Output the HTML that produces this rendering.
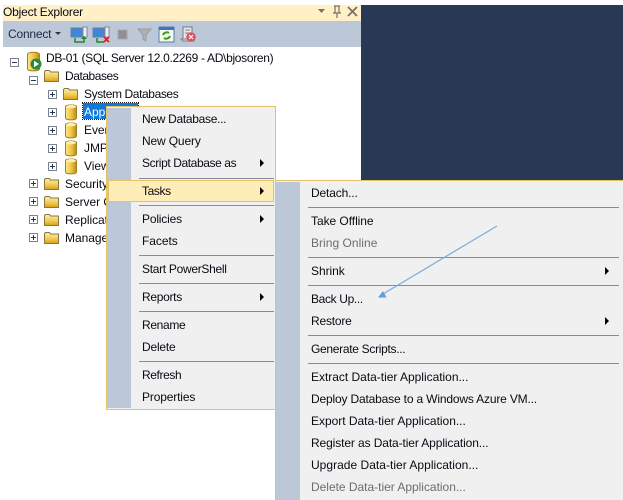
<!DOCTYPE html>
<html><head><meta charset="utf-8">
<style>
html,body{margin:0;padding:0;width:623px;height:500px;overflow:hidden;background:#fff}
body{position:relative;font-family:"Liberation Sans",sans-serif;font-size:12px;color:#000}
div{position:absolute}
.t{line-height:16px;white-space:nowrap;position:absolute;letter-spacing:-.05px;color:#0a0a14}
.t.g{color:#6d6d6d}
.s{position:absolute;height:1px;background:#858b98}
.a{position:absolute;width:0;height:0;border-left:4px solid #000;border-top:4px solid transparent;border-bottom:4px solid transparent}
svg{position:absolute;overflow:visible}
</style></head>
<body>
<div style="left:361px;top:5px;width:262px;height:175px;background:#293955"></div>
<div style="left:3px;top:5px;width:358px;height:16px;background:#fff0c8"></div>
<div style="left:3px;top:21px;width:358px;height:26px;background:#bcc7d8"></div>
<span class="t" style="left:3px;top:4px;letter-spacing:-.18px">Object Explorer</span>
<svg style="left:0;top:0" width="623" height="50">
<path d="M318 9h7l-3.500 4z" fill="#7a7260"/>
<path d="M334 6h6M335 6v7h4V6M333 13h8M337 13v5" fill="none" stroke="#7a7260" stroke-width="1.200"/>
<path d="M348 7l9 9M357 7l-9 9" stroke="#7a7260" stroke-width="1.800"/>
<path d="M55 32h6l-3 3z" fill="#333"/>
<rect x="71" y="28" width="11" height="9" fill="#3f86d8" stroke="#6a7f9c"/><rect x="83" y="27" width="4" height="10" fill="#eef" stroke="#7a8aa0"/>
<path d="M75 38v4h9v-3" fill="none" stroke="#1d8a2a" stroke-width="1.500"/><path d="M81 39l3-3 3 3z" fill="#1d8a2a"/>
<rect x="93" y="28" width="11" height="9" fill="#3f86d8" stroke="#6a7f9c"/><rect x="105" y="27" width="4" height="10" fill="#eef" stroke="#7a8aa0"/>
<path d="M97 38v4h7" fill="none" stroke="#1d8a2a" stroke-width="1.500"/><path d="M104 37l5 5M109 37l-5 5" stroke="#e02020" stroke-width="1.800"/>
<rect x="118" y="30" width="9" height="9" fill="#8d8f94" stroke="#a6a8ad"/>
<path d="M138 29h13l-5 6v6l-3-2v-4z" fill="#aeb0b3" stroke="#999ba0"/>
<rect x="159" y="27" width="15" height="15" fill="#f6f8ee" stroke="#4f7fb5"/><rect x="159" y="27" width="15" height="3" fill="#3f74b5"/>
<path d="M163 35a4 4 0 0 1 6-2M170 36a4 4 0 0 1-6 2" fill="none" stroke="#3a9a20" stroke-width="2"/>
<path d="M183 27h9v12h-9zM181 39h11l2 2h-11z" fill="#e4e6ea" stroke="#777b84"/>
<path d="M185 30h5M185 33h5" stroke="#888"/>
<circle cx="191" cy="37" r="4.800" fill="#d9535f"/><path d="M189 35l4 4M193 35l-4 4" stroke="#fff" stroke-width="1.200"/>
</svg>
<span class="t" style="left:8px;top:26px;color:#1e2a44;letter-spacing:-.2px">Connect</span>

<svg style="left:0;top:47px" width="361" height="200">
<defs>
<linearGradient id="y" x1="0" x2="1" y1="0" y2="0"><stop offset="0" stop-color="#ffe88a"/><stop offset=".55" stop-color="#edc23f"/><stop offset="1" stop-color="#b98a18"/></linearGradient>
<linearGradient id="f" x1="0" x2="0" y1="0" y2="1"><stop offset="0" stop-color="#fff0b0"/><stop offset=".6" stop-color="#f0c850"/><stop offset="1" stop-color="#d99e18"/></linearGradient>
<g id="pl"><rect x=".5" y=".5" width="8" height="8" fill="#fff" stroke="#7a8290"/><path d="M2 4.500h5M4.500 2v5" stroke="#2a3550"/></g>
<g id="mi"><rect x=".5" y=".5" width="8" height="8" fill="#fff" stroke="#7a8290"/><path d="M2 4.500h5" stroke="#2a3550"/></g>
<g id="fo"><path d="M.5 11.500V1.500l1-1h4l1 1.500h8v9.500z" fill="url(#f)" stroke="#8a7640"/></g>
<g id="db"><path d="M.5 2.500C.5 .5 11.500 .5 11.500 2.500V14c0 2.500-11 2.500-11 0z" fill="url(#y)" stroke="#a47f20"/><ellipse cx="6" cy="2.700" rx="5" ry="1.700" fill="#fbeeb0"/></g>
</defs>
<use href="#mi" x="10" y="11"/>
<path d="M27.500 7.500C27.500 4.500 39.500 4.500 39.500 7.500V22c0 2.500-12 2.500-12 0z" fill="url(#y)" stroke="#a47f20"/>
<circle cx="36" cy="17" r="5.500" fill="#2b8a3a"/><path d="M34 13.800v6.400l5-3.200z" fill="#fff"/>
<use href="#mi" x="29" y="29"/><use href="#fo" x="44" y="23"/>
<use href="#pl" x="48" y="43"/><use href="#fo" x="63" y="41"/>
<use href="#pl" x="48" y="61"/><use href="#db" x="65" y="57"/>
<use href="#pl" x="48" y="79"/><use href="#db" x="65" y="75"/>
<use href="#pl" x="48" y="97"/><use href="#db" x="65" y="93"/>
<use href="#pl" x="48" y="115"/><use href="#db" x="65" y="111"/>
<use href="#pl" x="29" y="132"/><use href="#fo" x="44" y="131"/>
<use href="#pl" x="29" y="150"/><use href="#fo" x="44" y="149"/>
<use href="#pl" x="29" y="168"/><use href="#fo" x="44" y="167"/>
<use href="#pl" x="29" y="186"/><use href="#fo" x="44" y="185"/>
</svg>
<span class="t" style="left:46px;top:50px;letter-spacing:-.31px">DB-01 (SQL Server 12.0.2269 - AD\bjosoren)</span>
<span class="t" style="left:65px;top:68px;letter-spacing:-.45px">Databases</span>
<span class="t" style="left:84px;top:86px;letter-spacing:-.4px">System Databases</span>
<div style="left:83px;top:103px;width:55px;height:16px;background:#0f78d8;outline:1px dotted #1a1a1a"></div>
<span class="t" style="left:84px;top:104px;color:#fff">App</span>
<span class="t" style="left:84px;top:122px">Ever</span>
<span class="t" style="left:84px;top:140px">JMP</span>
<span class="t" style="left:84px;top:158px">View</span>
<span class="t" style="left:65px;top:176px">Security</span>
<span class="t" style="left:65px;top:194px">Server O</span>
<span class="t" style="left:65px;top:212px">Replicat</span>
<span class="t" style="left:65px;top:230px">Manage</span>

<!-- submenu -->
<div style="left:275px;top:180px;width:348px;height:320px;background:#f0f0f0;border-top:1px solid #e5c365;border-left:1px solid #e5c365;box-sizing:border-box"></div>
<div style="left:276px;top:182px;width:24px;height:318px;background:#bcc7d8"></div>
<div class="s" style="left:308px;top:207px;width:311px"></div>
<div class="s" style="left:308px;top:257px;width:311px"></div>
<div class="s" style="left:308px;top:285px;width:311px"></div>
<div class="s" style="left:308px;top:335px;width:311px"></div>
<div class="s" style="left:308px;top:363px;width:311px"></div>
<span class="t" style="left:311px;top:185px;letter-spacing:-.15px">Detach...</span>
<span class="t" style="left:311px;top:213px">Take Offline</span>
<span class="t g" style="left:311px;top:235px;letter-spacing:.03px">Bring Online</span>
<span class="t" style="left:311px;top:263px">Shrink</span>
<span class="t" style="left:311px;top:291px;letter-spacing:-.35px">Back Up...</span>
<span class="t" style="left:311px;top:313px;letter-spacing:-.2px">Restore</span>
<span class="t" style="left:311px;top:341px;letter-spacing:-.3px">Generate Scripts...</span>
<span class="t" style="left:311px;top:369px;letter-spacing:-.02px">Extract Data-tier Application...</span>
<span class="t" style="left:311px;top:391px;letter-spacing:-.17px">Deploy Database to a Windows Azure VM...</span>
<span class="t" style="left:311px;top:413px;letter-spacing:-.02px">Export Data-tier Application...</span>
<span class="t" style="left:311px;top:435px;letter-spacing:-.11px">Register as Data-tier Application...</span>
<span class="t" style="left:311px;top:457px;letter-spacing:.02px">Upgrade Data-tier Application...</span>
<span class="t g" style="left:311px;top:479px;letter-spacing:-.02px">Delete Data-tier Application...</span>
<div class="a" style="left:605px;top:267px"></div>
<div class="a" style="left:605px;top:317px"></div>

<!-- main menu -->
<div style="left:106px;top:106px;width:170px;height:304px;background:#f0f0f0;border:1px solid #e5c365;box-sizing:border-box"></div>
<div style="left:107px;top:108px;width:24px;height:300px;background:#bcc7d8"></div>
<div class="s" style="left:139px;top:178px;width:135px"></div>
<div class="s" style="left:139px;top:205px;width:135px"></div>
<div class="s" style="left:139px;top:255px;width:135px"></div>
<div class="s" style="left:139px;top:283px;width:135px"></div>
<div class="s" style="left:139px;top:311px;width:135px"></div>
<div class="s" style="left:139px;top:361px;width:135px"></div>
<div style="left:108px;top:180px;width:166px;height:22px;background:#ffedb8;border:1px solid #e5c365;box-sizing:border-box"></div>
<span class="t" style="left:142px;top:111px;letter-spacing:-.3px">New Database...</span>
<span class="t" style="left:142px;top:133px;letter-spacing:-.15px">New Query</span>
<span class="t" style="left:142px;top:155px;letter-spacing:-.4px">Script Database as</span>
<span class="t" style="left:142px;top:183px;letter-spacing:-.4px">Tasks</span>
<span class="t" style="left:142px;top:211px;letter-spacing:-.18px">Policies</span>
<span class="t" style="left:142px;top:233px">Facets</span>
<span class="t" style="left:142px;top:261px;letter-spacing:-.3px">Start PowerShell</span>
<span class="t" style="left:142px;top:289px;letter-spacing:-.3px">Reports</span>
<span class="t" style="left:142px;top:317px;letter-spacing:-.33px">Rename</span>
<span class="t" style="left:142px;top:339px;letter-spacing:-.2px">Delete</span>
<span class="t" style="left:142px;top:367px;letter-spacing:-.4px">Refresh</span>
<span class="t" style="left:142px;top:389px;letter-spacing:-.15px">Properties</span>
<div class="a" style="left:260px;top:159px"></div>
<div class="a" style="left:260px;top:187px"></div>
<div class="a" style="left:260px;top:215px"></div>
<div class="a" style="left:260px;top:293px"></div>

<svg style="left:0;top:0" width="623" height="500">
<path d="M497 226L383 294" stroke="#7aaadf" stroke-width="1.200" fill="none"/>
<path d="M378 297.500L386.500 297.500L383 291z" fill="#5f9ddd"/>
</svg>
</body></html>
